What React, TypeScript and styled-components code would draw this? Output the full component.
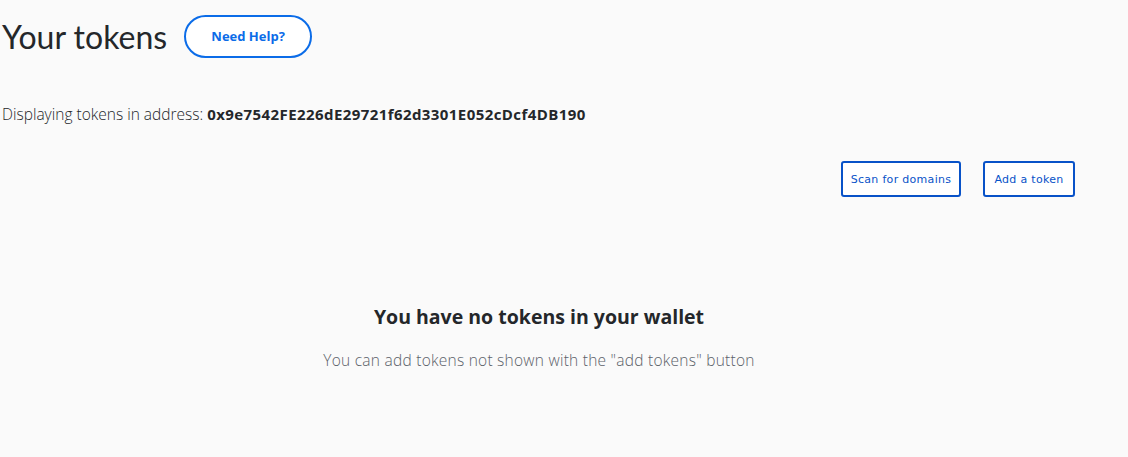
import React from "react";
import styled, { createGlobalStyle } from "styled-components";

const Global = createGlobalStyle`
  html, body { margin: 0; padding: 0; background: #fafafa; }
  body { font-family: "Open Sans", "Noto Sans", sans-serif; color: #24272a; }
`;

const Page = styled.div`
  width: 1075px;
  padding: 0 0 0 2px;
  box-sizing: border-box;
  display: flex;
  flex-direction: column;
`;

const Header = styled.div`
  display: flex;
  align-items: center;
  gap: 17px;
  height: 72px;
`;

const Title = styled.h1`
  margin: 0;
  font-family: Lato, sans-serif;
  font-weight: 400;
  font-size: 32px;
  letter-spacing: 0px;
  color: #24272a;
`;

const HelpButton = styled.button`
  height: 43px;
  width: 128px;
  border: 2px solid #0b6ce8;
  border-radius: 22px;
  background: #fff;
  color: #0b6ce8;
  font-family: "Open Sans", sans-serif;
  font-weight: 700;
  font-size: 13px;
  cursor: pointer;
`;

const AddressLine = styled.p`
  margin: 30px 0 0 0;
  font-size: 15.5px;
  font-weight: 300;
  line-height: 24px;
  color: #24272a;
`;

const Address = styled.span`
  font-weight: 700;
  font-size: 15px;
  letter-spacing: 0.42px;
`;

const Actions = styled.div`
  display: flex;
  justify-content: flex-end;
  gap: 22px;
  margin-top: 35px;
`;

const ActionButton = styled.button<{ $w: number }>`
  width: ${(p) => p.$w}px;
  height: 36px;
  border: 2px solid #0852c8;
  border-radius: 3px;
  background: #fff;
  color: #0852c8;
  font-family: "DejaVu Sans", sans-serif;
  font-size: 11px;
  letter-spacing: 0.3px;
  cursor: pointer;
`;

const Empty = styled.div`
  display: flex;
  flex-direction: column;
  align-items: center;
  margin-top: 106px;
  padding-left: 1px;
`;

const EmptyTitle = styled.h2`
  margin: 0;
  font-size: 19.5px;
  font-weight: 700;
  letter-spacing: 0px;
  color: #24272a;
`;

const EmptyText = styled.p`
  margin: 19px 0 0 0;
  font-size: 15.5px;
  font-weight: 300;
  letter-spacing: 0.25px;
  color: #5a6169;
`;

export default function App() {
  return (
    <>
      <Global />
      <Page>
        <Header>
          <Title>Your tokens</Title>
          <HelpButton>Need Help?</HelpButton>
        </Header>
        <AddressLine>
          Displaying tokens in address:{" "}
          <Address>0x9e7542FE226dE29721f62d3301E052cDcf4DB190</Address>
        </AddressLine>
        <Actions>
          <ActionButton $w={120}>Scan for domains</ActionButton>
          <ActionButton $w={92}>Add a token</ActionButton>
        </Actions>
        <Empty>
          <EmptyTitle>You have no tokens in your wallet</EmptyTitle>
          <EmptyText>
            You can add tokens not shown with the "add tokens" button
          </EmptyText>
        </Empty>
      </Page>
    </>
  );
}
